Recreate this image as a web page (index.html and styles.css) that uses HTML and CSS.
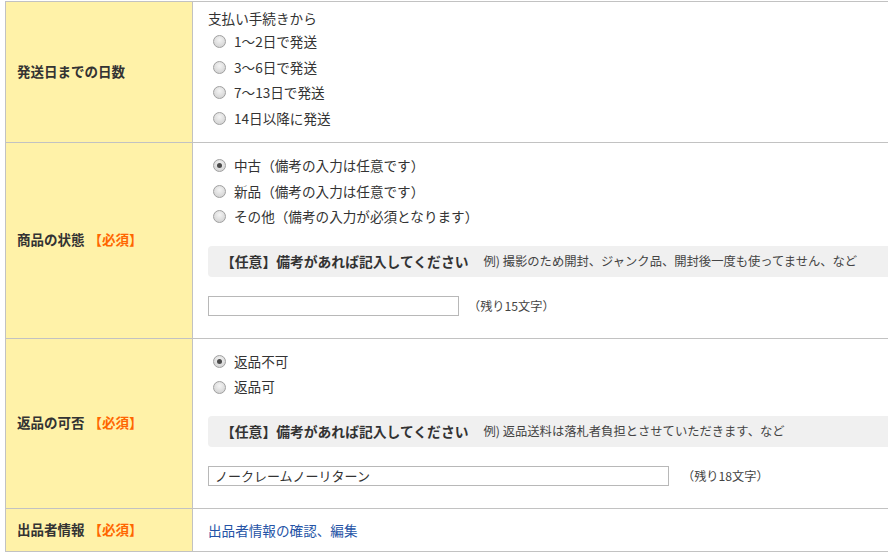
FILE: index.html
```html
<!DOCTYPE html>
<html lang="ja">
<head>
<meta charset="utf-8">
<title>出品フォーム</title>
<link rel="stylesheet" href="styles.css">
</head>
<body>
<div class="page">
  <div class="form">
    <div class="label">発送日までの日数</div>
    <div class="field field-ship">
      <div class="heading">支払い手続きから</div>
      <label class="opt"><input type="radio" name="ship" class="radio"><span>1〜2日で発送</span></label>
      <label class="opt"><input type="radio" name="ship" class="radio"><span>3〜6日で発送</span></label>
      <label class="opt"><input type="radio" name="ship" class="radio"><span>7〜13日で発送</span></label>
      <label class="opt"><input type="radio" name="ship" class="radio"><span>14日以降に発送</span></label>
    </div>

    <div class="label">商品の状態<span class="req">【必須】</span></div>
    <div class="field field-block">
      <label class="opt"><input type="radio" name="cond" class="radio" checked><span>中古（備考の入力は任意です）</span></label>
      <label class="opt"><input type="radio" name="cond" class="radio"><span>新品（備考の入力は任意です）</span></label>
      <label class="opt"><input type="radio" name="cond" class="radio"><span>その他（備考の入力が必須となります）</span></label>
      <div class="note"><span class="note-title">【任意】備考があれば記入してください</span><span class="note-ex">例) 撮影のため開封、ジャンク品、開封後一度も使ってません、など</span></div>
      <div class="input-row">
        <input type="text" class="text-input w-short" value="">
        <span class="remain">（残り15文字）</span>
      </div>
    </div>

    <div class="label">返品の可否<span class="req">【必須】</span></div>
    <div class="field field-block">
      <label class="opt"><input type="radio" name="ret" class="radio" checked><span>返品不可</span></label>
      <label class="opt"><input type="radio" name="ret" class="radio"><span>返品可</span></label>
      <div class="note"><span class="note-title">【任意】備考があれば記入してください</span><span class="note-ex">例) 返品送料は落札者負担とさせていただきます、など</span></div>
      <div class="input-row">
        <input type="text" class="text-input w-long" value="ノークレームノーリターン">
        <span class="remain remain-long">（残り18文字）</span>
      </div>
    </div>

    <div class="label">出品者情報<span class="req">【必須】</span></div>
    <div class="field field-link">
      <a href="#" class="link">出品者情報の確認、編集</a>
    </div>
  </div>
</div>
</body>
</html>
```

FILE: styles.css
```css
html, body {
  margin: 0;
  padding: 0;
  background: #fff;
  overflow: hidden;
}
body {
  font-family: "Noto Sans CJK JP", "Noto Sans", sans-serif;
  color: #333;
  font-size: 13.6px;
}
.page {
  width: 888px;
  height: 559px;
  overflow: hidden;
  padding: 1px 0 0 5px;
  box-sizing: border-box;
}
.form {
  display: grid;
  grid-template-columns: 187px 740px;
  border-top: 1px solid #c2c2c2;
  border-left: 1px solid #c2c2c2;
  width: max-content;
}
.label {
  background: #fff2a8;
  border-right: 1px solid #c2c2c2;
  border-bottom: 1px solid #c2c2c2;
  display: flex;
  align-items: center;
  padding-left: 11px;
  padding-bottom: 2px;
  font-weight: bold;
  font-size: 13.5px;
  color: #333;
}
.req {
  color: #ff6600;
  margin-left: 4px;
}
.field {
  border-bottom: 1px solid #c2c2c2;
  padding-left: 15px;
}
.field-ship {
  padding-top: 5px;
  padding-bottom: 10.6px;
}
.heading {
  line-height: 22px;
  height: 22px;
}
.opt {
  display: flex;
  align-items: center;
  height: 25.6px;
  line-height: 25.6px;
}
.radio {
  appearance: none;
  -webkit-appearance: none;
  width: 13px;
  height: 13px;
  margin: 0 8px 0 5px;
  border: 1px solid #a0a0a0;
  border-radius: 50%;
  box-sizing: border-box;
  background: radial-gradient(circle at 50% 35%, #f4f4f4 0%, #dcdcdc 60%, #cdcdcd 100%);
  display: grid;
  place-items: center;
  flex: none;
}
.radio:checked::after {
  content: "";
  width: 5px;
  height: 5px;
  border-radius: 50%;
  background: #4a4a4a;
}
.field-block {
  padding-top: 10px;
  padding-bottom: 22px;
}
.note {
  margin-top: 16px;
  height: 31px;
  background: #f0f0f0;
  border-radius: 4px 0 0 4px;
  display: flex;
  align-items: center;
  padding-left: 13px;
  white-space: nowrap;
}
.note-title {
  font-weight: bold;
  font-size: 13.8px;
}
.note-ex {
  font-size: 12.3px;
  margin-left: 15px;
  color: #444;
}
.input-row {
  margin-top: 19px;
  display: flex;
  align-items: center;
  height: 20px;
}
.text-input {
  height: 20px;
  box-sizing: border-box;
  border: 1px solid #b8b8b8;
  margin: 0;
  padding: 0 6px;
  font-family: "Noto Sans CJK JP", "Noto Sans", sans-serif;
  font-size: 13px;
  color: #333;
  outline: none;
}
.w-short { width: 251px; }
.w-long { width: 461px; }
.remain {
  font-size: 12.2px;
  margin-left: 9px;
  color: #444;
}
.remain-long {
  margin-left: 13px;
}
.field-link {
  padding-top: 10px;
  padding-bottom: 10px;
  line-height: 22px;
}
.link {
  color: #2553a6;
  text-decoration: none;
}
```
